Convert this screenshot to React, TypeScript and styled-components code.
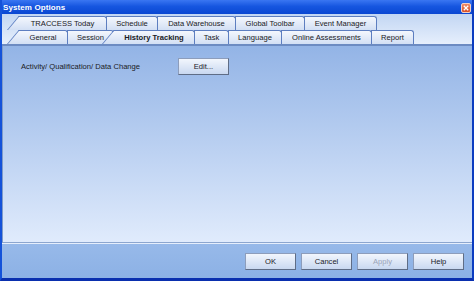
import React from "react";
import styled, { createGlobalStyle } from "styled-components";

const Global = createGlobalStyle`
  html, body { margin: 0; padding: 0; background: #fff; }
  body { font-family: "Liberation Sans", Arial, sans-serif; }
`;

const Window = styled.div`
  width: 474px;
  height: 281px;
  box-sizing: border-box;
  display: flex;
  flex-direction: column;
  border-left: 2px solid #1452d9;
  border-right: 2px solid #0b3cc0;
  border-bottom: 3px solid #0a2fae;
  background: #94b6e7;
  overflow: hidden;
`;

const TitleBar = styled.div`
  height: 14px;
  flex: none;
  display: flex;
  align-items: center;
  justify-content: space-between;
  margin: 0 -2px;
  padding: 0 3px 0 3px;
  background: linear-gradient(#3a76f2 0%, #1656e0 45%, #0a47d2 100%);
`;

const Title = styled.span`
  color: #fff;
  font-weight: bold;
  font-size: 8px;
  letter-spacing: 0.1px;
`;

const CloseBtn = styled.div`
  width: 10px;
  height: 10px;
  margin-top: 1px;
  box-sizing: border-box;
  border: 1px solid #f4d0c4;
  border-radius: 2px;
  background: linear-gradient(#f08a64, #d8502a);
  display: flex;
  align-items: center;
  justify-content: center;
`;

const TabStrip = styled.div`
  flex: none;
  display: flex;
  flex-direction: column;
  padding-top: 2px;
  background: linear-gradient(#c2d6f3, #e6effc);
  border-bottom: 2px solid #6c8bc2;
`;

const TabRow = styled.div`
  height: 14px;
  display: flex;
  align-items: stretch;
  padding-left: 17px;
`;

const Tab = styled.div<{ $w: number; $slant?: boolean; $active?: boolean }>`
  position: relative;
  z-index: 0;
  width: ${(p) => p.$w}px;
  flex: none;
  box-sizing: border-box;
  display: flex;
  align-items: center;
  justify-content: center;
  border-top: 1px solid #5d7ec0;
  border-right: 1px solid #5d7ec0;
  border-left: ${(p) => (p.$slant ? "none" : "1px solid #5d7ec0")};
  margin-left: ${(p) => (p.$slant ? "0" : "-1px")};
  border-top-right-radius: 3px;
  background: linear-gradient(#f4f7fd, #d2dff4);
  font-size: 7.6px;
  color: #1a1a24;
  font-weight: ${(p) => (p.$active ? "bold" : "normal")};
  white-space: nowrap;

  ${(p) =>
    p.$slant &&
    `
    &::before {
      content: "";
      position: absolute;
      z-index: -1;
      left: -12px;
      top: -1px;
      bottom: 0;
      width: 24px;
      box-sizing: border-box;
      border-left: 1px solid #5d7ec0;
      border-top: 1px solid #5d7ec0;
      background: linear-gradient(#f4f7fd, #d2dff4);
      transform: skewX(-40deg);
      transform-origin: bottom left;
    }
  `}
`;

const Content = styled.div`
  flex: 1;
  display: flex;
  flex-direction: column;
  padding: 12px 0 0 18px;
  background: linear-gradient(#93b4e6, #e0ebfc);
  border-left: 1px solid #7f9bc8;
  border-bottom: 1px solid #8ca6cf;
`;

const OptionRow = styled.div`
  display: flex;
  align-items: center;
`;

const OptionLabel = styled.span`
  width: 157px;
  font-size: 7.6px;
  color: #1a1a24;
`;

const Button = styled.button<{ $disabled?: boolean }>`
  width: 51px;
  height: 17px;
  padding: 0;
  box-sizing: border-box;
  border: 1px solid #8d9dbb;
  border-right-color: #5f6d86;
  border-bottom-color: #5f6d86;
  background: linear-gradient(#f2f6fd, #c9d8f0);
  font-family: "Liberation Sans", Arial, sans-serif;
  font-size: 7.6px;
  color: ${(p) => (p.$disabled ? "#9aa4b8" : "#1a1a28")};
  cursor: default;
`;

const ButtonBar = styled.div`
  height: 33px;
  flex: none;
  display: flex;
  align-items: center;
  justify-content: flex-end;
  gap: 5px;
  padding: 1px 8px 0 0;
  background: linear-gradient(#97b9e9, #8cb1e5);
  border-top: 1px solid #e6eefb;
`;

const upperTabs: { label: string; w: number; slant?: boolean }[] = [
  { label: "TRACCESS Today", w: 88, slant: true },
  { label: "Schedule", w: 52 },
  { label: "Data Warehouse", w: 79 },
  { label: "Global Toolbar", w: 70 },
  { label: "Event Manager", w: 73 },
];

const lowerTabs: { label: string; w: number; slant?: boolean; active?: boolean }[] = [
  { label: "General", w: 49, slant: true },
  { label: "Session", w: 47 },
  { label: "History Tracking", w: 81, slant: true, active: true },
  { label: "Task", w: 35 },
  { label: "Language", w: 54 },
  { label: "Online Assessments", w: 91 },
  { label: "Report", w: 43 },
];

export default function App() {
  return (
    <>
      <Global />
      <Window>
        <TitleBar>
          <Title>System Options</Title>
          <CloseBtn>
            <svg width="6" height="6" viewBox="0 0 6 6">
              <path d="M0.8 0.8 L5.2 5.2 M5.2 0.8 L0.8 5.2" stroke="#fff" strokeWidth="1.3" />
            </svg>
          </CloseBtn>
        </TitleBar>
        <TabStrip>
          <TabRow>
            {upperTabs.map((t) => (
              <Tab key={t.label} $w={t.w} $slant={t.slant}>
                {t.label}
              </Tab>
            ))}
          </TabRow>
          <TabRow>
            {lowerTabs.map((t) => (
              <Tab key={t.label} $w={t.w} $slant={t.slant} $active={t.active}>
                {t.label}
              </Tab>
            ))}
          </TabRow>
        </TabStrip>
        <Content>
          <OptionRow>
            <OptionLabel>Activity/ Qualification/ Data Change</OptionLabel>
            <Button>Edit...</Button>
          </OptionRow>
        </Content>
        <ButtonBar>
          <Button>OK</Button>
          <Button>Cancel</Button>
          <Button $disabled>Apply</Button>
          <Button>Help</Button>
        </ButtonBar>
      </Window>
    </>
  );
}
